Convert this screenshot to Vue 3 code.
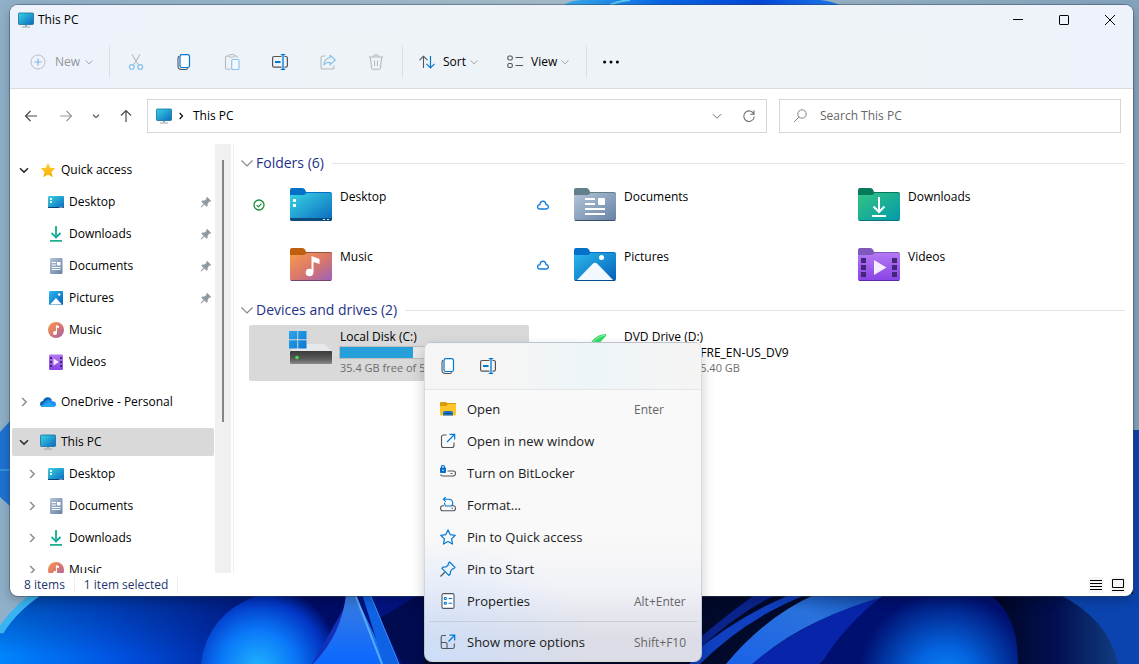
<script setup>
import { ref } from 'vue'

const search = ref('')

const commands = [
  { id: 'cut', label: 'Cut', disabled: true },
  { id: 'copy', label: 'Copy', disabled: false },
  { id: 'paste', label: 'Paste', disabled: true },
  { id: 'rename', label: 'Rename', disabled: false },
  { id: 'share', label: 'Share', disabled: true },
  { id: 'trash', label: 'Delete', disabled: true },
]

const tree = [
  { label: 'Quick access', icon: 'star', chevron: 'down' },
  { label: 'Desktop', icon: 'desktop', child: true, pinned: true },
  { label: 'Downloads', icon: 'download', child: true, pinned: true },
  { label: 'Documents', icon: 'document', child: true, pinned: true },
  { label: 'Pictures', icon: 'picture', child: true, pinned: true },
  { label: 'Music', icon: 'music', child: true },
  { label: 'Videos', icon: 'video', child: true },
  { label: 'OneDrive - Personal', icon: 'onedrive', chevron: 'right', group: true },
  { label: 'This PC', icon: 'pc', chevron: 'down', group: true, selected: true },
  { label: 'Desktop', icon: 'desktop', child: true, chevron: 'right' },
  { label: 'Documents', icon: 'document', child: true, chevron: 'right' },
  { label: 'Downloads', icon: 'download', child: true, chevron: 'right' },
  { label: 'Music', icon: 'music', child: true, chevron: 'right' },
]

const folders = [
  { label: 'Desktop', icon: 'f-desktop', state: 'synced' },
  { label: 'Documents', icon: 'f-documents', state: 'cloud' },
  { label: 'Downloads', icon: 'f-downloads' },
  { label: 'Music', icon: 'f-music' },
  { label: 'Pictures', icon: 'f-pictures', state: 'cloud' },
  { label: 'Videos', icon: 'f-videos' },
]

const usedPercent = 40

const menu = [
  { label: 'Open', icon: 'm-open', keys: 'Enter' },
  { label: 'Open in new window', icon: 'm-newwin' },
  { label: 'Turn on BitLocker', icon: 'm-lock' },
  { label: 'Format...', icon: 'm-format' },
  { label: 'Pin to Quick access', icon: 'm-star' },
  { label: 'Pin to Start', icon: 'm-pin' },
  { label: 'Properties', icon: 'm-props', keys: 'Alt+Enter' },
]
</script>

<template>
  <div class="screen">
    <!-- Icon sheet -->
    <svg class="sheet" aria-hidden="true">
      <defs>
        <linearGradient id="g-pc" x1="0" y1="0" x2="1" y2="1"><stop offset="0" stop-color="#38d4e4" /><stop offset="1" stop-color="#0b69bf" /></linearGradient>
        <linearGradient id="g-doc" x1="0" y1="0" x2="1" y2="1"><stop offset="0" stop-color="#b4c4d8" /><stop offset="1" stop-color="#6582a4" /></linearGradient>
        <linearGradient id="g-dl" x1="0" y1="0" x2="1" y2="1"><stop offset="0" stop-color="#33c481" /><stop offset="1" stop-color="#0299ad" /></linearGradient>
        <linearGradient id="g-mus" x1="0" y1="0" x2="1" y2="1"><stop offset="0" stop-color="#fb9a4b" /><stop offset=".55" stop-color="#d5756f" /><stop offset="1" stop-color="#9a62bd" /></linearGradient>
        <linearGradient id="g-pic" x1="0" y1="0" x2="1" y2="1"><stop offset="0" stop-color="#2bb8ee" /><stop offset="1" stop-color="#0560b8" /></linearGradient>
        <linearGradient id="g-vid" x1="0" y1="0" x2="0" y2="1"><stop offset="0" stop-color="#b478f4" /><stop offset="1" stop-color="#8843e4" /></linearGradient>
        <linearGradient id="g-star" x1="0" y1="0" x2="0" y2="1"><stop offset="0" stop-color="#ffd23a" /><stop offset="1" stop-color="#fbab00" /></linearGradient>
        <linearGradient id="g-disk" x1="0" y1="0" x2="0" y2="1"><stop offset="0" stop-color="#3a3a3a" /><stop offset=".6" stop-color="#5a5a5a" /><stop offset="1" stop-color="#8a8a8a" /></linearGradient>
        <linearGradient id="g-win" x1="0" y1="0" x2="1" y2="1"><stop offset="0" stop-color="#2ba6ea" /><stop offset="1" stop-color="#0a78d4" /></linearGradient>
      </defs>
      <symbol id="pc" viewBox="0 0 16 16">
        <rect x=".5" y="1" width="15" height="11.5" rx=".8" fill="url(#g-pc)" stroke="#156f9f" stroke-width=".8" />
        <path d="M7 13h2v1.6H7z" fill="#9aa7b2" /><path d="M4 14.6h8v1H4z" fill="#9aa7b2" />
      </symbol>
      <symbol id="down" viewBox="0 0 16 16"><path d="M4 6.3l4 3.8 4-3.8" fill="none" stroke="currentColor" stroke-width="1.5" /></symbol>
      <symbol id="right" viewBox="0 0 16 16"><path d="M6.2 4l3.9 4-3.9 4" fill="none" stroke="currentColor" stroke-width="1.5" /></symbol>
      <symbol id="thin-down" viewBox="0 0 16 16"><path d="M2.5 5.5L8 11l5.500-5.500" fill="none" stroke="currentColor" stroke-width="1.2" /></symbol>
      <symbol id="star" viewBox="0 0 16 16"><path d="M8 .8l2.200 4.900 5.200.6-3.900 3.600 1.100 5.300L8 12.600l-4.600 2.600 1.100-5.300L.6 6.300l5.200-.6z" fill="url(#g-star)" /></symbol>
      <symbol id="desktop" viewBox="0 0 16 16">
        <rect y="2" width="16" height="12" rx="1" fill="url(#g-pc)" /><path d="M0 13h16v.3q0 .7-.7.7H.7Q0 14 0 13.300z" fill="#0a4478" />
        <path d="M2 4h2v2H2zM2 7h2v2H2z" fill="#fff" /><path d="M11.500 12.700h1v1h-1zM13.500 12.700h1v1h-1z" fill="#fff" />
      </symbol>
      <symbol id="download" viewBox="0 0 16 16"><path d="M8 0v11M3.500 7L8 11.500 12.500 7" fill="none" stroke="url(#g-dl)" stroke-width="1.800" /><path d="M7.100 0h1.800v11H7.100z" fill="#28b78b" /><path d="M2 14h12v1.800H2z" fill="#1fb090" /></symbol>
      <symbol id="document" viewBox="0 0 16 16">
        <rect x="2" width="12.500" height="16" rx="1.200" fill="url(#g-doc)" /><path d="M4 4.500h4M4 7h4M4 9.500h8.500M4 11.500h8.500" stroke="#fff" /><path d="M9 4h3.500v3.500H9z" fill="#fff" />
      </symbol>
      <symbol id="picture" viewBox="0 0 16 16">
        <rect x="1" y="1" width="14" height="14" rx="1" fill="url(#g-pic)" /><path d="M2 14.500L8 8l6 6.500z" fill="#fff" /><circle cx="11.200" cy="4.500" r="1.200" fill="#fff" />
      </symbol>
      <symbol id="music" viewBox="0 0 16 16">
        <circle cx="8" cy="8" r="8" fill="url(#g-mus)" /><ellipse cx="7" cy="11" rx="2" ry="1.900" fill="#fff" /><path d="M7.900 3l3 1v2.200L9 5.600V11H7.900z" fill="#fff" />
      </symbol>
      <symbol id="video" viewBox="0 0 16 16">
        <rect x="1" y=".5" width="14" height="15.500" rx="1" fill="url(#g-vid)" /><path d="M2 3h2v2H2zM2 7h2v2H2zM2 11h2v2H2zM12 3h2v2h-2zM12 7h2v2h-2zM12 11h2v2h-2z" fill="#45257a" /><path d="M5.500 4.500L11 8l-5.500 3.600z" fill="#f3ecfc" />
      </symbol>
      <symbol id="onedrive" viewBox="0 0 16 16">
        <path d="M3.500 13C1.500 13 0 11.700 0 10s1.300-2.900 3-3c.5-2 2.200-3.800 4.700-3.800 2 0 3.600 1.200 4.300 3l-5 4z" fill="#0b64b4" /><path d="M6.500 6.200c1.800-1.200 4.800-.6 5.800 1.100C14.500 7.200 16 8.500 16 10.200S14.600 13 13 13H3.500c-1.200 0-2-.4-2.700-1.100z" fill="#1d8fe8" /><path d="M1 12L9 8.300l6 3.700c-.5.700-1.200 1-2 1H3.500c-1.200 0-2-.4-2.500-1z" fill="#29a5f5" />
      </symbol>
      <symbol id="pin" viewBox="0 0 12 12"><path d="M7 .8L11.200 5l-1 .8-.7-.2-1.900 1.900.1 2.300-1 .9-2.300-2.300L1.200 11.500.5 11l3-3.300L1.300 5.400l1-1 2.300.2 1.900-1.900-.2-1z" fill="#8e9aa3" /></symbol>

      <!-- Command bar -->
      <symbol id="plus" viewBox="0 0 16 16"><circle cx="8" cy="8" r="7" fill="none" stroke="#b9bec4" /><path d="M8 4.500v7M4.500 8h7" stroke="#7db8e6" stroke-width="1.200" /></symbol>
      <symbol id="cut" viewBox="0 0 16 16"><path d="M4 .5l6.300 10.300M12 .5L5.700 10.800" fill="none" stroke="#b4b9be" stroke-width="1.100" /><g fill="none" stroke="#86c0ea" stroke-width="1.200"><circle cx="3.800" cy="13" r="2.400" /><circle cx="12.200" cy="13" r="2.400" /></g></symbol>
      <symbol id="copy" viewBox="0 0 16 16"><path d="M3.200 2.300Q2 3 2 4.500V12q0 3.500 3.500 3.500h4q1.500 0 2.200-1.200" fill="none" stroke="#515459" stroke-width="1.100" /><rect x="4" y=".7" width="9.500" height="12.800" rx="1.800" fill="#fbfdff" stroke="#0078d4" stroke-width="1.200" /></symbol>
      <symbol id="paste" viewBox="0 0 16 16"><path d="M4.500 2H3Q1.500 2 1.500 3.500v10.300q0 1.500 1.500 1.500h3.500M10.500 2H12q1.300 0 1.300 1.500" fill="none" stroke="#b4b9be" stroke-width="1.100" /><rect x="4.600" y=".6" width="6" height="2.600" rx="1.300" fill="none" stroke="#b4b9be" /><rect x="7.700" y="5.500" width="7.300" height="10" rx="1.200" fill="#f4f9fd" stroke="#86c0ea" stroke-width="1.100" /></symbol>
      <symbol id="rename" viewBox="0 0 16 16"><path d="M9.500 2.500H2Q.6 2.500.6 4v7.700q0 1.500 1.400 1.500h7.500M12.500 2.500h1.300q1.600 0 1.600 1.500v7.700q0 1.500-1.600 1.500h-1.300" fill="none" stroke="#515459" stroke-width="1.200" /><path d="M3 8h5.500" stroke="#0078d4" stroke-width="2" /><path d="M11 1v14M8.800.7h4.400M8.800 15.300h4.400" stroke="#0078d4" stroke-width="1.300" /></symbol>
      <symbol id="share" viewBox="0 0 16 16"><path d="M5 2H3Q1 2 1 4v9q0 2 2 2h9q2 0 2-2v-1.500" fill="none" stroke="#b4b9be" stroke-width="1.100" /><path d="M10 1.200L15.300 6 10 10.800V8.300C7.200 8.300 5.300 9 4 11c0-4 2-7 6-7.300z" fill="none" stroke="#86c0ea" stroke-width="1.100" stroke-linejoin="round" /></symbol>
      <symbol id="trash" viewBox="0 0 16 16"><path d="M.8 3h14.400M5.500 3Q5.500.7 8 .7T10.500 3M2.300 3l1.200 10.800q.2 1.500 1.500 1.500h6q1.300 0 1.500-1.500L13.700 3M6.500 6.500v5.500M9.500 6.500v5.500" fill="none" stroke="#b4b9be" stroke-width="1.100" /></symbol>
      <symbol id="sort" viewBox="0 0 16 16"><path d="M4.500 14V2.500M.5 6.200l4-4 4 4" fill="none" stroke="#515459" stroke-width="1.100" /><path d="M11.500 2v11.500M7.500 9.800l4 4 4-4" fill="none" stroke="#0078d4" stroke-width="1.200" /></symbol>
      <symbol id="view" viewBox="0 0 16 16"><g fill="none" stroke="#515459" stroke-width="1.100"><rect x=".8" y="2" width="4.500" height="4" rx="1.500" /><rect x=".8" y="9.500" width="4.500" height="4" rx="1.500" /><path d="M8.500 3.500H16M8.500 11.500H16" /></g></symbol>
      <symbol id="more" viewBox="0 0 16 16"><circle cx="1.600" cy="8" r="1.500" /><circle cx="8" cy="8" r="1.500" /><circle cx="14.400" cy="8" r="1.500" /></symbol>
      <symbol id="back" viewBox="0 0 16 16"><path d="M14 8H2.500M7.500 3l-5 5 5 5" fill="none" stroke="currentColor" stroke-width="1.200" /></symbol>
      <symbol id="refresh" viewBox="0 0 16 16"><path d="M13.600 6A6 6 0 1 0 14 8.500M13.700 1.800V6H9.500" fill="none" stroke="currentColor" stroke-width="1.200" /></symbol>
      <symbol id="lens" viewBox="0 0 16 16"><circle cx="10" cy="6" r="4.200" fill="none" stroke="currentColor" /><path d="M7 9l-5 5" stroke="currentColor" /></symbol>

      <!-- Large folders -->
      <symbol id="f-desktop" viewBox="0 0 42 34">
        <path d="M0 2q0-2 2-2h10q3 0 4 4h24q2 0 2 2v8H0z" fill="#0670c8" /><path d="M0 7h14l3-2h23q2 0 2 2v24q0 2-2 2H2q-2 0-2-2z" fill="url(#g-pc)" /><path d="M0 30h42v1q0 2-2 2H2q-2 0-2-2z" fill="#0b4a7c" /><path d="M3 11h3v3H3zM3 16h3v3H3z" fill="#fff" /><path d="M33 31h2v1h-2zM37 31h2v1h-2z" fill="#d6ecfa" />
      </symbol>
      <symbol id="f-documents" viewBox="0 0 42 34">
        <path d="M0 2q0-2 2-2h10q3 0 4 4h24q2 0 2 2v8H0z" fill="#627f8c" /><path d="M0 7h14l3-2h23q2 0 2 2v24q0 2-2 2H2q-2 0-2-2z" fill="url(#g-doc)" /><path d="M1 32.500h40" stroke="#3c4f66" /><path d="M11 11h10M11 16h10M11 21h20M11 26h20" stroke="#fff" stroke-width="2" /><rect x="24" y="10" width="7" height="7" rx="1" fill="#fff" />
      </symbol>
      <symbol id="f-downloads" viewBox="0 0 42 34">
        <path d="M0 2q0-2 2-2h10q3 0 4 4h24q2 0 2 2v8H0z" fill="#06795a" /><path d="M0 7h14l3-2h23q2 0 2 2v24q0 2-2 2H2q-2 0-2-2z" fill="url(#g-dl)" /><path d="M1 32.500h40" stroke="#087277" /><path d="M21 9v14M15.500 18.500L21 24l5.500-5.500M14 28h14" fill="none" stroke="#fff" stroke-width="2" />
      </symbol>
      <symbol id="f-music" viewBox="0 0 42 34">
        <path d="M0 2q0-2 2-2h10q3 0 4 4h24q2 0 2 2v8H0z" fill="#c0600f" /><path d="M16 4h24q2 0 2 2v2H15z" fill="#9c5346" /><path d="M0 7h14l3-2h23q2 0 2 2v24q0 2-2 2H2q-2 0-2-2z" fill="url(#g-mus)" /><path d="M1 32.500h40" stroke="#7c4470" /><circle cx="19.500" cy="24.500" r="3.800" fill="#fff" /><path d="M21.500 8l8 3v5l-6-2v10.500h-2z" fill="#fff" />
      </symbol>
      <symbol id="f-pictures" viewBox="0 0 42 34">
        <path d="M0 2q0-2 2-2h10q3 0 4 4h24q2 0 2 2v8H0z" fill="#0670c8" /><path d="M0 7h14l3-2h23q2 0 2 2v24q0 2-2 2H2q-2 0-2-2z" fill="url(#g-pic)" /><path d="M1 32.500h40" stroke="#064a90" /><path d="M3 32l15.500-16q2.500-2.300 5 0L39 32z" fill="#f2f9fe" /><circle cx="27.500" cy="9.500" r="2.500" fill="#fff" />
      </symbol>
      <symbol id="f-videos" viewBox="0 0 42 34">
        <path d="M0 2q0-2 2-2h10q3 0 4 4h24q2 0 2 2v8H0z" fill="#7e58bb" /><path d="M0 7h14l3-2h23q2 0 2 2v24q0 2-2 2H2q-2 0-2-2z" fill="url(#g-vid)" /><path d="M1 32.500h40" stroke="#5c2ca6" /><path d="M3 10h5v5H3zM3 17h5v5H3zM3 24h5v5H3zM34 10h5v5h-5zM34 17h5v5h-5zM34 24h5v5h-5z" fill="#45257a" /><path d="M16 12l12.500 7.500L16 27z" fill="#f3ecfc" />
      </symbol>
      <symbol id="synced" viewBox="0 0 12 12"><circle cx="6" cy="6" r="5" fill="none" stroke="#1b8e35" stroke-width="1.300" /><path d="M3.700 6.200l1.600 1.600L8.400 4.600" fill="none" stroke="#1b8e35" stroke-width="1.200" /></symbol>
      <symbol id="cloud" viewBox="0 0 12 12"><path d="M3 10Q.6 10 .6 7.800T2.900 5.600Q3.400 2.200 6 2.200T9 5.600Q11.400 5.700 11.400 7.800T9.200 10z" fill="none" stroke="#0f7bd8" stroke-width="1.300" /></symbol>
      <symbol id="disk" viewBox="0 0 44 36">
        <path d="M8 13h28l7 8H1z" fill="#e6e8ec" /><rect x="1" y="20" width="42" height="13" rx="1" fill="url(#g-disk)" /><circle cx="8" cy="26.500" r="1.800" fill="#3fe04a" /><path d="M0 0h8.300v8.300H0zM9.200 0h8.300v8.300H9.200zM0 9.200h8.300v8.300H0zM9.200 9.200h8.300v8.300H9.200z" fill="url(#g-win)" />
      </symbol>
      <symbol id="dvd" viewBox="0 0 44 36"><path d="M15 22Q17 4 33 3C34 6 30 7 27 12Q24 16 23 22z" fill="#35dd66" /><path d="M18 14Q23 6 32 4" fill="none" stroke="#8ff0a8" /><path d="M4 24h36v9H4z" fill="#4a4a4a" /></symbol>

      <!-- Context menu -->
      <symbol id="m-open" viewBox="0 0 16 16"><path d="M0 2q0-1 1-1h4.500q1 0 1.500 1h8q1 0 1 1v6H0z" fill="#d99a09" /><path d="M0 5h6.500l1.500-2H15q1 0 1 1v9.500q0 1-1 1H1q-1 0-1-1z" fill="#fcc628" /><path d="M3 14.500V12q0-2 2-2h6q2 0 2 2v2.500z" fill="#1272c4" /><path d="M5.500 12.500h5" stroke="#09407c" stroke-width="1.200" /></symbol>
      <symbol id="m-newwin" viewBox="0 0 16 16"><path d="M6.500 2H3.500Q1.500 2 1.500 4v8.500q0 2 2 2H12q2 0 2-2V9.500" fill="none" stroke="#515459" stroke-width="1.100" /><path d="M7 9L14.500 1.500M9.500 1.300h5.200v5.200" fill="none" stroke="#0078d4" stroke-width="1.200" /></symbol>
      <symbol id="m-lock" viewBox="0 0 16 16"><path d="M7.500 6h6q2 0 2 2.300T13.500 11H2.500Q.8 11 .6 9.500" fill="none" stroke="#515459" stroke-width="1.100" /><path d="M10.500 8.500h2" stroke="#515459" /><path d="M1.500 3V1.700Q1.500 .5 3 .5t1.500 1.200V3" fill="none" stroke="#0078d4" stroke-width="1.100" /><rect x="0" y="2.500" width="6" height="5.500" rx=".7" fill="#0b6fc6" /><circle cx="3" cy="5.200" r=".7" fill="#fff" /></symbol>
      <symbol id="m-format" viewBox="0 0 16 16"><path d="M4 8.700H2.500Q.6 8.700.6 11.200T2.500 13.800h11q1.900 0 1.900-2.600T13.500 8.700H12M11.500 11.200h1.500" fill="none" stroke="#515459" stroke-width="1.100" /><path d="M4.900 9H11.200A3.700 3.700 0 0 0 9 2.300H3.500M5.700 0L3.400 2.300l2.300 2.300M4.700 5.500Q4.300 7.500 5.500 9" fill="none" stroke="#0078d4" stroke-width="1.100" /></symbol>
      <symbol id="m-star" viewBox="0 0 16 16"><path d="M8 .9l2.200 4.700 5.100.7-3.700 3.600.9 5.200L8 12.600l-4.500 2.500.9-5.200L.7 6.300l5.100-.7z" fill="none" stroke="#0078d4" stroke-width="1.200" stroke-linejoin="round" /></symbol>
      <symbol id="m-pin" viewBox="0 0 16 16"><path d="M5 11L.5 15.500" stroke="#515459" stroke-width="1.200" /><path d="M9.600 1l5.400 5.400-1.200 1.300-1.500.3-1.800 2.500-.3 2.600-1.300 1.300-7-7 1.200-1.200 2.700-.2 2.400-2 .2-1.700z" fill="none" stroke="#0078d4" stroke-width="1.200" stroke-linejoin="round" /></symbol>
      <symbol id="m-props" viewBox="0 0 16 16"><rect x="2" y=".6" width="12" height="14.800" rx="1.500" fill="#fff" stroke="#515459" stroke-width="1.100" /><g fill="none" stroke="#0078d4" stroke-width="1.100"><rect x="4.300" y="4.500" width="2" height="2" rx=".5" /><rect x="4.300" y="9.300" width="2" height="2" rx=".5" /><path d="M8.500 5.500h3.700M8.500 10.300h3.700" /></g></symbol>
      <symbol id="m-more" viewBox="0 0 16 16"><path d="M6 1.500H3q-1.800 0-1.800 1.800v9.400q0 1.800 1.800 1.800h9.500q1.800 0 1.800-1.800V9.500M1.200 8.500h4.500q1.300 0 1.300 1.300v4.700" fill="none" stroke="#515459" stroke-width="1.100" /><path d="M8.500 7.500l6-6M9.500 1.200h5.200v5.200" fill="none" stroke="#0078d4" stroke-width="1.200" /></symbol>
    </svg>

    <!-- Desktop wallpaper -->
    <svg class="wallpaper" viewBox="0 0 1139 664" preserveAspectRatio="none" aria-hidden="true">
      <defs>
        <linearGradient id="w-sky" x1="0" y1="0" x2="1" y2="0"><stop offset="0" stop-color="#8fb0c8" /><stop offset=".5" stop-color="#a6bccb" /><stop offset="1" stop-color="#84a4be" /></linearGradient>
        <linearGradient id="w-top" x1="0" y1="0" x2="1" y2="0"><stop offset="0" stop-color="#38b0ee" /><stop offset=".35" stop-color="#0a68e8" /><stop offset=".7" stop-color="#0348dc" /><stop offset="1" stop-color="#1e7cf0" /></linearGradient>
        <linearGradient id="w-a" gradientUnits="userSpaceOnUse" x1="0" y1="680" x2="250" y2="600"><stop offset="0" stop-color="#0088ff" /><stop offset=".45" stop-color="#0052e0" /><stop offset="1" stop-color="#00188c" /></linearGradient>
        <linearGradient id="w-shade" gradientUnits="userSpaceOnUse" x1="0" y1="590" x2="0" y2="655"><stop offset="0" stop-color="#001c66" stop-opacity=".5" /><stop offset="1" stop-color="#001c66" stop-opacity="0" /></linearGradient>
        <radialGradient id="w-b" gradientUnits="userSpaceOnUse" cx="258" cy="668" r="84"><stop offset="0" stop-color="#20b4ff" /><stop offset=".45" stop-color="#0a78f8" /><stop offset=".8" stop-color="#0236c4" /><stop offset="1" stop-color="#000c66" /></radialGradient>
        <linearGradient id="w-c" x1="0" y1="0" x2="0" y2="1"><stop offset="0" stop-color="#3c7ce0" /><stop offset="1" stop-color="#0a68ff" /></linearGradient>
        <linearGradient id="w-d" x1="0" y1="1" x2="1" y2="0"><stop offset="0" stop-color="#1a62e8" /><stop offset=".6" stop-color="#2a72dc" /><stop offset="1" stop-color="#1048a8" /></linearGradient>
        <radialGradient id="w-e" gradientUnits="userSpaceOnUse" cx="945" cy="680" r="92"><stop offset="0" stop-color="#0a88fa" /><stop offset=".35" stop-color="#0464e0" /><stop offset=".95" stop-color="#001070" /></radialGradient>
        <linearGradient id="w-f" x1="0" y1="0" x2="1" y2="0"><stop offset="0" stop-color="#000620" /><stop offset=".5" stop-color="#020f50" /><stop offset="1" stop-color="#123f84" /></linearGradient>
      </defs>
      <rect width="1139" height="664" fill="url(#w-sky)" />
      <path d="M562 6Q570 0 582 0h238q12 1 22 6z" fill="url(#w-top)" />
      <path d="M610 5q8-4 20-5" fill="none" stroke="#5cc8f4" stroke-width="2" />
      <path d="M10 421L0 432v65l10 9z" fill="#1f72d4" /><path d="M0 470h10" stroke="#45b6ee" />
      <path d="M0 634Q16 606 46 590h384v74H0z" fill="url(#w-a)" />
      <path d="M0 634Q16 606 46 590h384v74H0z" fill="url(#w-shade)" />
      <path d="M0 632Q16 606 46 588" fill="none" stroke="#39b4f0" stroke-width="7" />
      <path d="M201 664Q207 612 262 594h85v26l-32 44z" fill="url(#w-b)" />
      <path d="M312 664l32-56-3 30-20 26z" fill="#1230b8" />
      <path d="M355 594h80v70h-60z" fill="#001380" />
      <path d="M424 592l-44 26 22 46h40z" fill="#010b50" />
      <path d="M313 664Q342 634 346 594h9l33 70z" fill="url(#w-c)" /><path d="M355 594l27 70" stroke="#58aef0" stroke-width="2" />
      <path d="M362 594h8l29 70h-15z" fill="#0f62e4" /><path d="M370 594l29 70" stroke="#3f8cec" />
      <rect x="424" y="590" width="715" height="74" fill="#020a2c" />
      <path d="M690 646q40-34 66-52h22q-44 20-88 64z" fill="#0a248c" /><path d="M700 664q46-46 108-70h-16q-54 22-102 62v8z" fill="#1040c0" />
      <path d="M754 664q44-44 142-70h-80q-50 22-90 70z" fill="url(#w-d)" />
      <path d="M752 664q54-46 134-68-30 28-66 68z" fill="#0824a8" />
      <path d="M821 664q24-40 64-70h104q30 20 29 70z" fill="url(#w-e)" />
      <path d="M989 594q30 22 29 70h104l-20-70z" fill="url(#w-f)" />
      <path d="M1133 430h6v234h-21q-10-46-60-70h75z" fill="#0b44ae" />
    </svg>

    <section class="window" aria-label="This PC">
      <header class="titlebar">
        <svg class="i16"><use href="#pc" /></svg>
        <h1>This PC</h1>
        <div class="captions">
          <button type="button" aria-label="Minimize"><svg viewBox="0 0 10 10"><path d="M0 4.500h10" /></svg></button>
          <button type="button" aria-label="Maximize"><svg viewBox="0 0 10 10"><rect x=".5" y=".5" width="9" height="9" rx=".6" /></svg></button>
          <button type="button" aria-label="Close"><svg viewBox="0 0 10 10"><path d="M0 0l10 10M10 0L0 10" /></svg></button>
        </div>
      </header>

      <div class="toolbar" role="toolbar" aria-label="Commands">
        <button type="button" class="new" disabled>
          <svg class="i16"><use href="#plus" /></svg><span>New</span><svg class="i10"><use href="#thin-down" /></svg>
        </button>
        <i class="rule"></i>
        <button v-for="c in commands" :key="c.id" type="button" class="command" :aria-label="c.label" :disabled="c.disabled">
          <svg class="i16"><use :href="'#' + c.id" /></svg>
        </button>
        <i class="rule"></i>
        <button type="button" class="drop"><svg class="i16"><use href="#sort" /></svg><span>Sort</span><svg class="i10"><use href="#thin-down" /></svg></button>
        <button type="button" class="drop"><svg class="i16"><use href="#view" /></svg><span>View</span><svg class="i10"><use href="#thin-down" /></svg></button>
        <i class="rule"></i>
        <button type="button" class="command" aria-label="See more"><svg class="i16"><use href="#more" /></svg></button>
      </div>

      <nav class="navrow" aria-label="Navigation">
        <div class="arrows">
          <button type="button" aria-label="Back"><svg class="i16"><use href="#back" /></svg></button>
          <button type="button" class="faint" aria-label="Forward"><svg class="i16 flip"><use href="#back" /></svg></button>
          <button type="button" aria-label="Recent locations"><svg class="i12"><use href="#down" /></svg></button>
          <button type="button" aria-label="Up"><svg class="i16 quarter"><use href="#back" /></svg></button>
        </div>
        <div class="address">
          <svg class="i16"><use href="#pc" /></svg>
          <svg class="i12 crumb"><use href="#right" /></svg>
          <a href="#this-pc">This PC</a>
          <button type="button" class="last" aria-label="Previous locations"><svg class="i12"><use href="#thin-down" /></svg></button>
          <button type="button" aria-label="Refresh"><svg class="i14"><use href="#refresh" /></svg></button>
        </div>
        <label class="search">
          <svg class="i16"><use href="#lens" /></svg>
          <input v-model="search" type="text" aria-label="Search This PC" placeholder="Search This PC" />
        </label>
      </nav>

      <div class="body">
        <aside class="side">
          <ul class="tree">
            <li v-for="(n, i) in tree" :key="i" :class="{ group: n.group }">
              <button type="button" class="node" :class="{ child: n.child, selected: n.selected }">
                <span class="twist" :class="n.chevron"><svg v-if="n.chevron" class="i16"><use :href="'#' + n.chevron" /></svg></span>
                <svg class="i16"><use :href="'#' + n.icon" /></svg>
                <span>{{ n.label }}</span>
                <svg v-if="n.pinned" class="i12 pinned"><use href="#pin" /></svg>
              </button>
            </li>
          </ul>
          <div class="scroll"><div class="thumb"></div></div>
        </aside>

        <main class="content">
          <section>
            <h2><svg class="i16"><use href="#thin-down" /></svg>Folders (6)</h2>
            <div class="tiles">
              <button v-for="f in folders" :key="f.label" type="button" class="tile">
                <span class="state"><svg v-if="f.state" class="i12"><use :href="'#' + f.state" /></svg></span>
                <svg class="folder"><use :href="'#' + f.icon" /></svg>
                <span class="name">{{ f.label }}</span>
              </button>
            </div>
          </section>
          <section>
            <h2><svg class="i16"><use href="#thin-down" /></svg>Devices and drives (2)</h2>
            <div class="tiles">
              <button type="button" class="tile selected">
                <span class="state"></span>
                <svg class="device"><use href="#disk" /></svg>
                <span class="info">
                  <span>Local Disk (C:)</span>
                  <span class="meter"><span class="used" :style="{ width: usedPercent + '%' }"></span></span>
                  <span class="muted">35.4 GB free of 59.3 GB</span>
                </span>
              </button>
              <button type="button" class="tile">
                <span class="state"></span>
                <svg class="device"><use href="#dvd" /></svg>
                <span class="info">
                  <span>DVD Drive (D:)</span>
                  <span class="volume">CCCOMA_X64FRE_EN-US_DV9</span>
                  <span class="muted">0 bytes free of 5.40 GB</span>
                </span>
              </button>
            </div>
          </section>
        </main>
      </div>

      <footer class="status">
        <span>8 items</span><span>1 item selected</span>
        <div class="modes">
          <button type="button" aria-label="Details view"><svg viewBox="0 0 12 12"><path d="M0 1.500h12M0 4.500h12M0 7.500h12M0 10.500h12" /></svg></button>
          <button type="button" aria-label="Large icons view"><svg viewBox="0 0 12 12"><path d="M.5.5h11v8H.5zM0 11.500h12" /></svg></button>
        </div>
      </footer>
    </section>

    <div class="menu" role="menu">
      <div class="quick">
        <button type="button" role="menuitem" aria-label="Copy"><svg class="i16"><use href="#copy" /></svg></button>
        <button type="button" role="menuitem" aria-label="Rename"><svg class="i16"><use href="#rename" /></svg></button>
      </div>
      <div class="items">
        <button v-for="m in menu" :key="m.label" type="button" role="menuitem">
          <svg class="i16"><use :href="'#' + m.icon" /></svg><span>{{ m.label }}</span><kbd v-if="m.keys">{{ m.keys }}</kbd>
        </button>
      </div>
      <div class="items extra">
        <button type="button" role="menuitem">
          <svg class="i16"><use href="#m-more" /></svg><span>Show more options</span><kbd>Shift+F10</kbd>
        </button>
      </div>
    </div>
  </div>
</template>

<style>
body { margin: 0; overflow: hidden; }
</style>

<style scoped>
* { box-sizing: border-box; }
.screen {
  position: relative;
  display: flex;
  height: 100vh;
  padding: 5px 6px 68px 10px;
  font: 12px/16px "Open Sans", "Noto Sans", sans-serif;
  color: #000;
}
button {
  display: flex;
  align-items: center;
  margin: 0;
  padding: 0;
  border: 0;
  background: none;
  color: inherit;
  font: inherit;
  text-align: left;
}
svg { flex: none; display: block; }
.sheet { position: absolute; width: 0; height: 0; }
.wallpaper { position: absolute; inset: 0; width: 100%; height: 100%; }
.i10 { width: 10px; height: 10px; }
.i12 { width: 12px; height: 12px; }
.i14 { width: 14px; height: 14px; }
.i16 { width: 16px; height: 16px; }

.window {
  position: relative;
  flex: 1;
  min-width: 0;
  display: flex;
  flex-direction: column;
  overflow: hidden;
  border-radius: 8px;
  background: #fff;
  box-shadow: 0 0 0 1px rgba(50, 70, 90, .45), 0 4px 12px rgba(0, 0, 0, .25);
}
.titlebar {
  display: flex;
  align-items: center;
  height: 29px;
  padding-left: 8px;
  gap: 4px;
  background: linear-gradient(90deg, #eef2fb, #eef3f8 40%, #eef3f8 75%, #eef2fb);
}
h1 { margin: 0; font-size: 12px; line-height: 16px; font-weight: 400; }
.captions { display: flex; margin-left: auto; }
.captions button { width: 46px; height: 29px; justify-content: center; }
.captions svg { width: 10px; height: 10px; overflow: visible; fill: none; stroke: #000; stroke-width: 1; }

.toolbar {
  display: flex;
  align-items: center;
  height: 55px;
  padding-top: 2px;
  border-bottom: 1px solid #d8dde2;
  background: linear-gradient(90deg, #eef2fb, #eef3f8 30%, #eef3f8 80%, #eef2fb);
}
.toolbar button { height: 32px; }
.new { width: 99px; padding-left: 20px; gap: 9px; }
.new, .new:disabled { color: #92969b; }
.new .i10, .drop .i10 { margin-left: -5px; color: #85898e; }
.rule { width: 1px; height: 32px; margin-right: 2px; background: #dce1e6; }
.command { width: 48px; justify-content: center; }
.command + .rule { margin-left: 2px; margin-right: 4px; }
.drop { width: 88px; padding-left: 12px; gap: 8px; }
.drop + .rule { margin-left: 3px; margin-right: 0; }

.navrow { display: flex; align-items: center; height: 54px; padding-right: 12px; gap: 12px; }
.arrows { display: grid; grid-template-columns: 35px 35px 26px 34px; margin: 0 -8px 0 3px; color: #4a4a4a; }
.arrows button { height: 32px; justify-content: center; }
.arrows .faint { color: #999; }
.flip { transform: scaleX(-1); }
.quarter { transform: rotate(90deg); }
.address, .search { display: flex; align-items: center; min-width: 0; height: 34px; border: 1px solid #d6d6d6; background: #fff; }
.address { flex: 1 1 620px; padding: 0 1px 0 8px; }
.address a { margin-left: 6px; color: #000; text-decoration: none; }
.address button { width: 32px; height: 32px; justify-content: center; color: #666; }
.address .last { margin-left: auto; }
.crumb { margin: 0 0 0 3px; }
.search { flex: 1 1 342px; padding-left: 12px; gap: 12px; color: #858585; }
.search input { flex: 1; min-width: 0; padding: 0; border: 0; outline: 0; background: none; font: inherit; color: #000; }
.search input::placeholder { color: #666; opacity: 1; }

.body { flex: 1; min-height: 0; display: flex; }
.side { display: flex; width: 224px; border-right: 1px solid #f0f0f0; overflow: hidden; }
.tree { flex: 1; margin: 0; padding: 11px 1px 0 2px; list-style: none; overflow: hidden; }
.tree li { padding: 2px 0; }
.tree .group { margin-top: 8px; }
.node { width: 100%; height: 28px; padding-left: 4px; gap: 5px; border-radius: 2px; }
.node.child { padding-left: 12px; }
.node.selected { background: #d9d9d9; }
.twist { width: 19px; color: #8c8c8c; }
.twist.down { color: #2b2b2b; }
.pinned { margin: 0 2px 0 auto; }
.scroll { width: 16px; margin: 1px 2px 0 0; padding: 16px 7px 0; background: #f0f0f0; }
.thumb { width: 2px; height: 262px; background: #858585; }

.content { flex: 1; min-width: 0; padding: 5px 8px 0 5px; overflow: hidden; }
.content section + section { margin-top: 1px; }
h2 { display: flex; align-items: center; height: 30px; margin: 0; font-size: 14px; font-weight: 400; color: #1e3287; }
h2 svg { margin-right: 1px; color: #888; }
h2::after { content: ""; flex: 1; height: 1px; margin-left: 8px; background: #e4e4e4; }
.tiles { display: grid; grid-template-columns: repeat(auto-fill, 280px); gap: 4px; padding-left: 10px; }
.tile { height: 56px; align-items: flex-start; border-radius: 2px; white-space: nowrap; }
.tile.selected { background: #d9d9d9; }
.state { width: 41px; padding: 21px 0 0 4px; }
.folder { width: 42px; height: 34px; margin-top: 10px; }
.name { margin: 11px 0 0 8px; }
.device { width: 44px; height: 36px; margin: 6px 0 0 -1px; }
.info { display: flex; flex-direction: column; margin: 4px 0 0 7px; }
.meter { width: 184px; height: 13px; margin: 1px 0 1px -1px; border: 1px solid #bcbcbc; background: #e6e6e6; }
.used { display: block; height: 100%; background: #26a0da; }
.volume { line-height: 15px; }
.muted { font-size: 11px; color: #6d6d6d; }

.status { display: flex; align-items: center; height: 23px; padding: 0 7px 0 14px; color: #25366f; }
.status > span { margin-right: 9px; padding-right: 9px; border-right: 1px solid #eee; }
.modes { display: flex; margin-left: auto; gap: 6px; }
.modes button { width: 16px; height: 16px; justify-content: center; background: #f6f6f6; }
.modes svg { width: 12px; height: 12px; fill: none; stroke: #000; }

.menu {
  position: absolute;
  top: 342px;
  left: 424px;
  width: 278px;
  border: 1px solid rgba(0, 0, 0, .12);
  border-radius: 8px;
  background:
    radial-gradient(ellipse 170px 120px at 0 100%, rgba(200, 222, 255, .75), rgba(200, 222, 255, 0)),
    linear-gradient(180deg, #f9f9f9 60%, #f1f2f7 77%, #dcdde6 93%);
  box-shadow: 0 6px 14px rgba(0, 0, 0, .2);
  color: #1c1c1c;
  font-size: 13px;
  overflow: hidden;
}
.quick { display: flex; height: 47px; padding-left: 3px; border-bottom: 1px solid #e3e5e6; background: linear-gradient(90deg, #f5f5f5 30%, #edf5f9 60%, #f6f4f3); }
.quick button { width: 40px; justify-content: center; }
.items { padding: 3px 0 4px; }
.items button { width: 100%; height: 32px; padding-left: 15px; gap: 11px; }
.items span { width: 156px; white-space: nowrap; }
.items kbd { padding-top: 2px; font: inherit; font-size: 12px; color: #666; }
.extra { margin: 0 4px; padding: 4px 0 3px; border-top: 1px solid #c9cdd6; }
.extra button { padding-left: 11px; }
</style>
